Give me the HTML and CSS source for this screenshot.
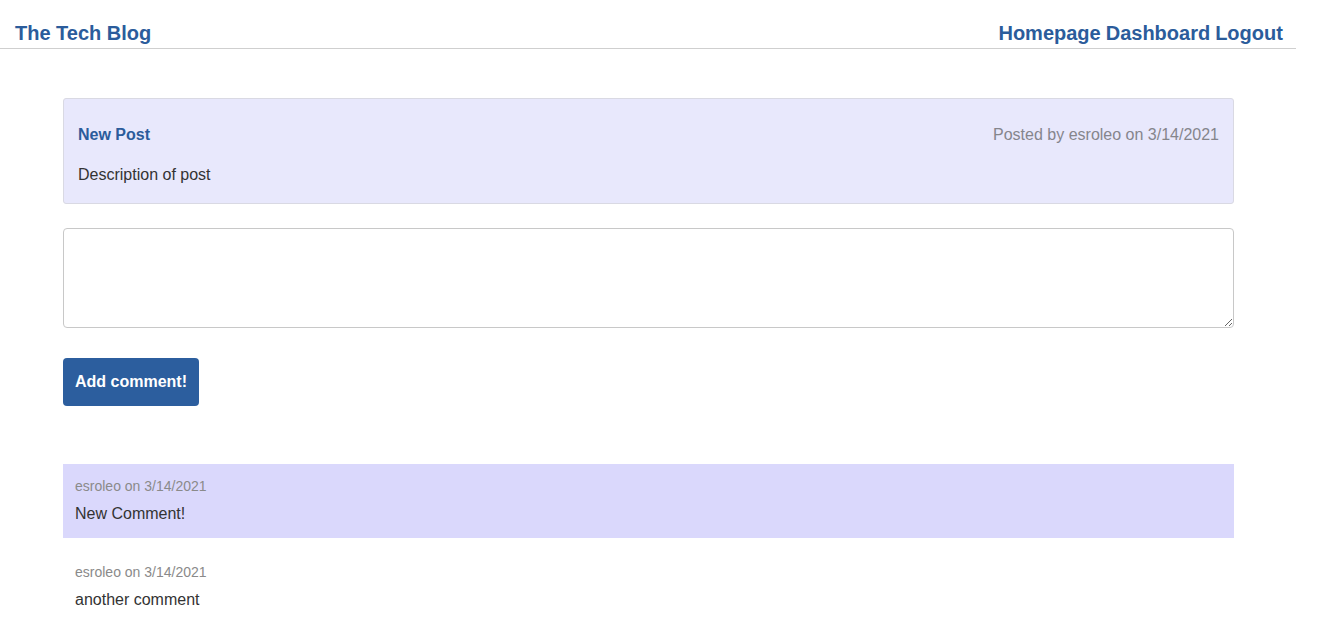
FILE: index.html
```html
<!DOCTYPE html>
<html lang="en">
<head>
<meta charset="utf-8">
<title>The Tech Blog</title>
<link rel="stylesheet" href="styles.css">
</head>
<body>
<header class="site-header">
  <a class="brand" href="#">The Tech Blog</a>
  <nav class="nav">
    <a href="#">Homepage</a>
    <a href="#">Dashboard</a>
    <a href="#">Logout</a>
  </nav>
</header>
<main class="main">
  <article class="post">
    <div class="post-head">
      <span class="post-title">New Post</span>
      <span class="post-meta">Posted by esroleo on 3/14/2021</span>
    </div>
    <p class="post-body">Description of post</p>
  </article>
  <form class="comment-form">
    <textarea class="comment-input"></textarea>
    <button type="button" class="btn">Add comment!</button>
  </form>
  <section class="comments">
    <div class="comment comment-alt">
      <div class="comment-meta">esroleo on 3/14/2021</div>
      <div class="comment-text">New Comment!</div>
    </div>
    <div class="comment">
      <div class="comment-meta">esroleo on 3/14/2021</div>
      <div class="comment-text">another comment</div>
    </div>
  </section>
</main>
</body>
</html>
```
FILE: styles.css
```css
* { box-sizing: border-box; }
body {
  margin: 0;
  font-family: "Liberation Sans", Arial, sans-serif;
  color: #333;
  background: #fff;
}
.site-header {
  width: 97%;
  display: flex;
  justify-content: space-between;
  align-items: center;
  padding: 21px 13px 3px 15px;
  border-bottom: 1px solid #cfcfcf;
  line-height: 24px;
}
.brand, .nav a {
  font-size: 20px;
  font-weight: bold;
  color: #2b5c9b;
  text-decoration: none;
}
.nav { display: flex; gap: 5px; }
.main {
  width: 1171px;
  margin: 49px 0 0 63px;
}
.post {
  background: #e8e8fc;
  border: 1px solid #d9d9e3;
  border-radius: 3px;
  padding: 27px 14px 19px 14px;
}
.post-head {
  display: flex;
  justify-content: space-between;
  line-height: 18px;
  font-size: 16px;
}
.post-title { font-weight: bold; color: #2b5c9b; }
.post-meta { color: #85858c; }
.post-body {
  margin: 22px 0 0;
  font-size: 16px;
  line-height: 18px;
}
.comment-form {
  margin-top: 24px;
  display: flex;
  flex-direction: column;
  align-items: flex-start;
}
.comment-input {
  display: block;
  width: 100%;
  height: 100px;
  border: 1px solid #c8c8c8;
  border-radius: 4px;
  margin: 0;
}
.btn {
  margin-top: 30px;
  height: 48px;
  padding: 0 12px;
  background: #2c5e9e;
  color: #fff;
  border: none;
  border-radius: 4px;
  font-family: "Liberation Sans", Arial, sans-serif;
  font-size: 16px;
  font-weight: bold;
}
.comments {
  margin-top: 58px;
  display: flex;
  flex-direction: column;
  gap: 12px;
}
.comment {
  padding: 14px 12px 15px;
}
.comment-alt { background: #dad8fc; }
.comment-meta {
  font-size: 14px;
  line-height: 16px;
  color: #8a8a8a;
}
.comment-text {
  margin-top: 11px;
  font-size: 16px;
  line-height: 18px;
  color: #333;
}
```
